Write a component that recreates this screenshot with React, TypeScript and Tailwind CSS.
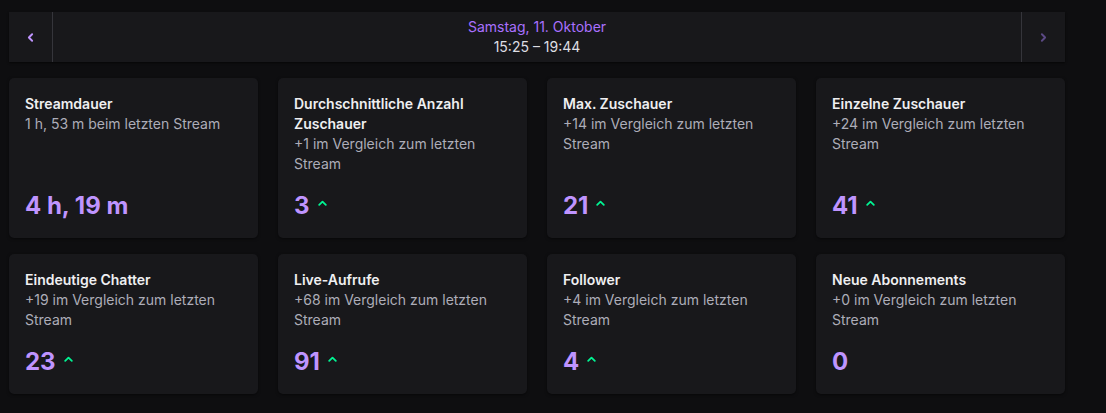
import { ChevronLeft, ChevronRight } from "lucide-react";

type Stat = {
  title: string;
  sub: string;
  value: string;
  up?: boolean;
};

const stats: Stat[] = [
  { title: "Streamdauer", sub: "1 h, 53 m beim letzten Stream", value: "4 h, 19 m" },
  { title: "Durchschnittliche Anzahl Zuschauer", sub: "+1 im Vergleich zum letzten Stream", value: "3", up: true },
  { title: "Max. Zuschauer", sub: "+14 im Vergleich zum letzten Stream", value: "21", up: true },
  { title: "Einzelne Zuschauer", sub: "+24 im Vergleich zum letzten Stream", value: "41", up: true },
  { title: "Eindeutige Chatter", sub: "+19 im Vergleich zum letzten Stream", value: "23", up: true },
  { title: "Live-Aufrufe", sub: "+68 im Vergleich zum letzten Stream", value: "91", up: true },
  { title: "Follower", sub: "+4 im Vergleich zum letzten Stream", value: "4", up: true },
  { title: "Neue Abonnements", sub: "+0 im Vergleich zum letzten Stream", value: "0" },
];

function UpArrow() {
  return (
    <svg width="9" height="6" viewBox="0 0 9 6" className="mb-[6px]">
      <path d="M1.2 4.8 L4.5 1.6 L7.8 4.8" fill="none" stroke="#00f593" strokeWidth="1.8" strokeLinecap="round" strokeLinejoin="round" />
    </svg>
  );
}

function StatCard({ stat }: { stat: Stat }) {
  return (
    <div className="bg-[#18181b] rounded-[5px] shadow-[0_1px_3px_rgba(0,0,0,0.5)] p-4 flex flex-col justify-between">
      <div className="pr-2">
        <p className="text-[14px] leading-5 font-semibold text-[#efeff1]">{stat.title}</p>
        <p className="text-[14px] leading-5 text-[#adadb8]">{stat.sub}</p>
      </div>
      <div className="mt-4 flex items-center gap-2 h-8">
        <span className="text-[24px] leading-8 font-bold text-[#bf94ff]">{stat.value}</span>
        {stat.up && <UpArrow />}
      </div>
    </div>
  );
}

export default function App() {
  return (
    <div className="min-h-screen w-[1106px] h-[413px] overflow-hidden bg-[#0e0e10] font-['Inter','Liberation_Sans',sans-serif]">
      <div className="w-[1056px] ml-[9px] pt-3">
        <div className="h-[50px] flex items-stretch bg-[#18181b] shadow-[0_1px_2px_rgba(0,0,0,0.6)]">
          <button className="w-[44px] flex items-center justify-center border-r border-[#35353b]">
            <ChevronLeft className="w-[13px] h-[13px] text-[#bf94ff]" strokeWidth={3.5} />
          </button>
          <div className="flex-1 flex flex-col items-center justify-center">
            <span className="text-[14px] leading-5 text-[#a970ff]">Samstag, 11. Oktober</span>
            <span className="text-[14px] leading-5 text-[#dedee3]">15:25 – 19:44</span>
          </div>
          <button className="w-[44px] flex items-center justify-center border-l border-[#35353b]">
            <ChevronRight className="w-[13px] h-[13px] text-[#5c4a86]" strokeWidth={3.5} />
          </button>
        </div>

        <div className="grid grid-cols-4 gap-x-5 gap-y-4 mt-4">
          {stats.map((s) => (
            <StatCard key={s.title} stat={s} />
          ))}
        </div>
      </div>
    </div>
  );
}
